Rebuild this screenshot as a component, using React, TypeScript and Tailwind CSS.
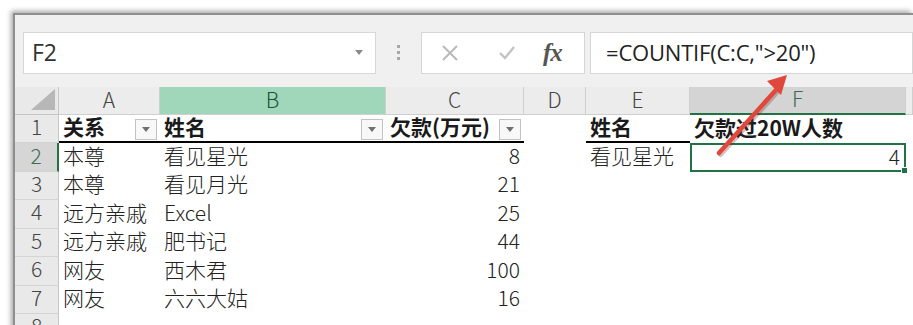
import React from "react";

const GRID = "grid grid-cols-[44px_101px_226px_138px_62px_104px_216px_1fr]";
const ROW = " h-[28.5px] bg-white text-[21px] leading-[22px]";

const rows = [
  { n: 2, a: "本尊", b: "看见星光", c: "8", e: "看见星光", f: "4" },
  { n: 3, a: "本尊", b: "看见月光", c: "21" },
  { n: 4, a: "远方亲戚", b: "Excel", c: "25" },
  { n: 5, a: "远方亲戚", b: "肥书记", c: "44" },
  { n: 6, a: "网友", b: "西木君", c: "100" },
  { n: 7, a: "网友", b: "六六大姑", c: "16" },
];

const Filter = () => (
  <span className="absolute right-[3px] top-[4px] w-[22px] h-[21px] border border-[#c3c3c3] bg-[#f8f8f8] flex items-center justify-center">
    <span className="w-0 h-0 border-x-[4px] border-x-transparent border-t-[5px] border-t-[#707070]" />
  </span>
);

const RowHead = ({ n, active }: { n: number; active?: boolean }) => (
  <div
    className={
      "flex items-center justify-center pb-[5px] border-b border-[#d4d4d4] text-[21px] font-light " +
      (active
        ? "bg-[#d6d6d6] text-[#3d6b52] border-r-2 border-r-[#217346]"
        : "bg-[#e9e9e9] text-[#444] border-r border-r-[#c6c6c6]")
    }
  >
    {n}
  </div>
);

const FormulaBar = () => (
  <div className="flex items-center h-[72px] pl-[8px] pt-[3px]">
    <div className="w-[353px] h-[42px] bg-white border border-[#d6d6d6] flex items-center justify-between pl-[8px] pr-[12px]">
      <span className="text-[23px] text-[#333] font-['Open_Sans',sans-serif]">F2</span>
      <span className="w-0 h-0 border-x-[4px] border-x-transparent border-t-[5px] border-t-[#8a8a8a]" />
    </div>
    <div className="w-[45px] flex flex-col items-center gap-[3px]">
      <span className="w-[3px] h-[3px] bg-[#a8a8a8]" />
      <span className="w-[3px] h-[3px] bg-[#a8a8a8]" />
      <span className="w-[3px] h-[3px] bg-[#a8a8a8]" />
    </div>
    <div className="w-[164px] h-[42px] bg-white border border-[#d6d6d6] flex items-center">
      <svg width="18" height="18" viewBox="0 0 18 18" className="ml-[19px]">
        <path d="M2 2 L16 16 M16 2 L2 16" stroke="#b9b9b9" strokeWidth="2" fill="none" />
      </svg>
      <svg width="18" height="16" viewBox="0 0 18 16" className="ml-[39px]">
        <path d="M2 8 L7 13 L16 2" stroke="#c2c2c2" strokeWidth="2.4" fill="none" />
      </svg>
      <span className="ml-[27px] text-[25px] italic font-bold text-[#555] font-['Liberation_Serif',serif] tracking-[-1px]">
        fx
      </span>
    </div>
    <div className="flex-1 ml-[5px] h-[42px] bg-white border border-[#d6d6d6] flex items-center pl-[15px]">
      <span className="text-[22px] text-[#222] font-['Open_Sans',sans-serif] tracking-[-0.2px]">
        =COUNTIF(C:C,"&gt;20")
      </span>
    </div>
  </div>
);

const ColHeader = () => {
  const cols: { l: string; cls?: string }[] = [
    { l: "A" },
    { l: "B", cls: "bg-[#a0d6b9] text-[#1f4f36]" },
    { l: "C" },
    { l: "D" },
    { l: "E" },
    { l: "F", cls: "bg-[#d4d4d4] text-[#3d6b52] border-b-2 border-b-[#217346]" },
    { l: "" },
  ];
  return (
    <div className={GRID + " h-[27.5px] text-[21px] leading-[22px] font-light text-[#444]"}>
      <div className="relative bg-[#e9e9e9] border-r border-b border-[#c6c6c6]">
        <svg width="24" height="21" viewBox="0 0 24 21" className="absolute right-[3px] bottom-[4px]">
          <path d="M0 21 L24 21 L24 0 Z" fill="#b7b7b7" />
        </svg>
      </div>
      {cols.map((c, i) => (
        <div
          key={i}
          className={
            "flex items-center justify-center pb-[4px] border-r border-b border-[#cfcfcf] " +
            (c.cls ?? "bg-[#ececec]")
          }
        >
          {c.l}
        </div>
      ))}
    </div>
  );
};

const App = () => {
  return (
    <div className="w-[913px] h-[325px] bg-white overflow-hidden font-['Noto_Sans_CJK_SC',sans-serif]">
      <div className="ml-[13px] mt-[13px] h-[330px] bg-[#f0f0f0] border-l-2 border-t-2 border-[#8f8f8f] shadow-[-2px_-2px_5px_rgba(0,0,0,0.35)] relative">
        <FormulaBar />
        <ColHeader />
        {/* row 1: table header */}
        <div className={GRID + ROW + " font-bold text-[#1a1a1a]"}>
          <RowHead n={1} />
          <div className="relative flex items-center pl-[4px] pb-[3px] border-b-2 border-black">
            关系
            <Filter />
          </div>
          <div className="relative flex items-center pl-[4px] pb-[3px] border-b-2 border-black">
            姓名
            <Filter />
          </div>
          <div className="relative flex items-center pl-[4px] pb-[3px] border-b-2 border-black">
            欠款(万元)
            <Filter />
          </div>
          <div />
          <div className="flex items-center pl-[4px] pb-[3px] border-b-2 border-black">姓名</div>
          <div className="flex items-center pl-[4px] pb-[3px] whitespace-nowrap">欠款过20W人数</div>
          <div />
        </div>
        {rows.map((r) => (
          <div key={r.n} className={GRID + ROW + " font-light text-[#222]"}>
            <RowHead n={r.n} active={r.n === 2} />
            <div className="flex items-center pl-[4px] pb-[5px] whitespace-nowrap">{r.a}</div>
            <div className="flex items-center pl-[4px] pb-[5px]">{r.b}</div>
            <div className="flex items-center justify-end pr-[4px] pb-[5px]">{r.c}</div>
            <div />
            <div className="flex items-center pl-[4px] pb-[5px]">{r.e ?? ""}</div>
            {r.f ? (
              <div className="relative flex items-center justify-end pr-[4px] pb-[3px] border-2 border-[#217346]">
                {r.f}
                <span className="absolute -right-[4px] -bottom-[4px] w-[7px] h-[7px] bg-[#217346] border border-white" />
              </div>
            ) : (
              <div />
            )}
            <div />
          </div>
        ))}
        <div className={GRID + ROW}>
          <RowHead n={8} />
          <div className="col-span-7" />
        </div>
        <svg
          width="90"
          height="100"
          viewBox="0 0 90 100"
          className="absolute left-[690px] top-[50px] pointer-events-none"
        >
          <line x1="14" y1="88" x2="72" y2="24" stroke="#7a2a24" strokeOpacity="0.3" strokeWidth="5" strokeLinecap="round" transform="translate(1.5,1.5)" />
          <line x1="14" y1="88" x2="71" y2="25" stroke="#e0483c" strokeWidth="4.5" strokeLinecap="round" />
          <path d="M82 10 L62 16 L76 30 Z" fill="#e0483c" />
        </svg>
      </div>
    </div>
  );
};

export default App;
